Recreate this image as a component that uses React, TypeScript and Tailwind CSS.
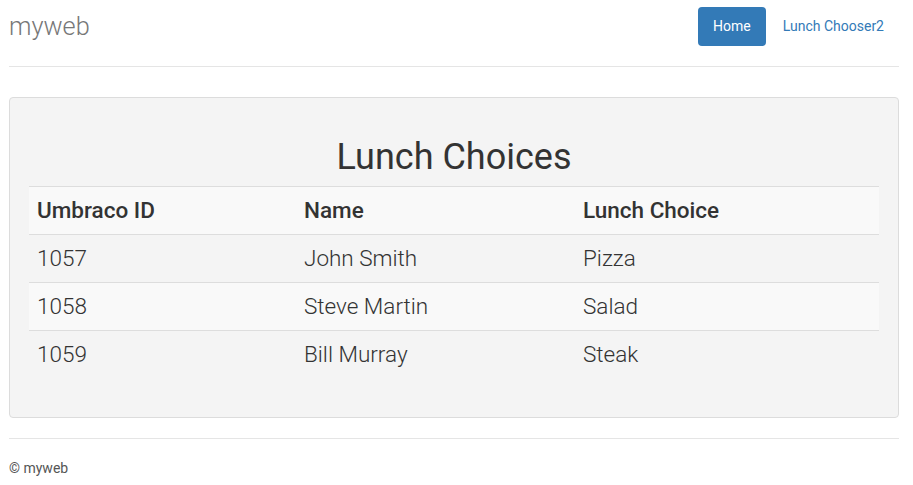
const rows = [
  { id: "1057", name: "John Smith", choice: "Pizza" },
  { id: "1058", name: "Steve Martin", choice: "Salad" },
  { id: "1059", name: "Bill Murray", choice: "Steak" },
];

export default function App() {
  return (
    <div className="min-h-screen bg-white font-['Roboto',sans-serif] text-[#333]">
      <div className="ml-[9px] w-[890px]">
        {/* header */}
        <div className="flex items-start justify-between border-b border-[#e5e5e5] pt-[7px] pb-[20px]">
          <h3 className="h-[39px] text-[25.3px] font-light leading-[40px] text-[#777]">myweb</h3>
          <nav className="flex gap-[2px] text-[14px] leading-[19px]">
            <a className="rounded-[4px] bg-[#337ab7] px-[15px] py-[10px] text-white">Home</a>
            <a className="rounded-[4px] px-[15px] py-[10px] text-[#337ab7]">Lunch Chooser2</a>
          </nav>
        </div>

        {/* jumbotron */}
        <div className="mt-[30px] rounded-[4px] border border-[#dcdcdc] bg-[#f4f4f4] px-[19px] pt-[39px] pb-[39px]">
          <h1 className="mb-[9px] text-center text-[36px] leading-[40px] font-normal">Lunch Choices</h1>
          <table className="w-full border-collapse text-left text-[22.5px] leading-[31px]">
            <thead>
              <tr className="border-t border-[#ddd] bg-[#f9f9f9]">
                <th className="w-[267px] px-[8px] py-[8px] font-medium">Umbraco ID</th>
                <th className="w-[279px] px-[8px] py-[8px] font-medium">Name</th>
                <th className="px-[8px] py-[8px] font-medium">Lunch Choice</th>
              </tr>
            </thead>
            <tbody className="font-light">
              {rows.map((r, i) => (
                <tr key={r.id} className={`border-t border-[#ddd] ${i === 1 ? "bg-[#f9f9f9]" : ""}`}>
                  <td className="px-[8px] py-[8px]">{r.id}</td>
                  <td className="px-[8px] py-[8px]">{r.name}</td>
                  <td className="px-[8px] py-[8px]">{r.choice}</td>
                </tr>
              ))}
            </tbody>
          </table>
        </div>

        {/* footer */}
        <footer className="mt-[20px] border-t border-[#e5e5e5] pt-[19px]">
          <p className="text-[14px] leading-[20px] text-[#555]">© myweb</p>
        </footer>
      </div>
    </div>
  );
}
